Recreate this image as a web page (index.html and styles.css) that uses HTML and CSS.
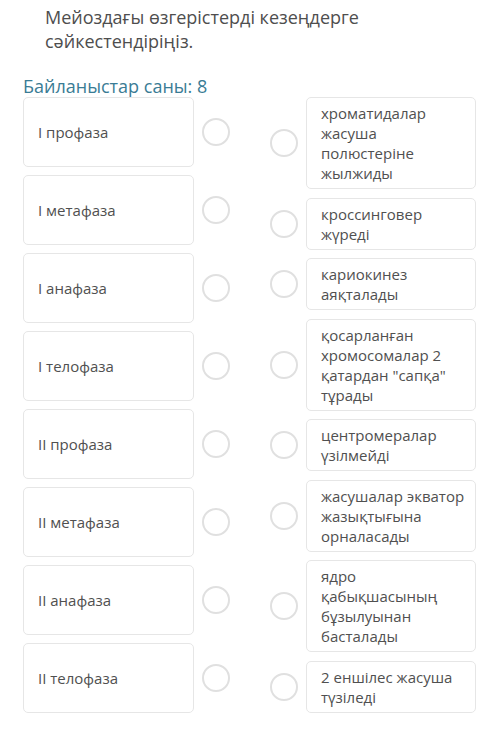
FILE: index.html
```html
<!DOCTYPE html>
<html lang="kk">
<head>
<meta charset="utf-8">
<title>Мейоз</title>
<link rel="stylesheet" href="styles.css">
</head>
<body>
<h1 class="title">Мейоздағы өзгерістерді кезеңдерге сәйкестендіріңіз.</h1>
<div class="count">Байланыстар саны: 8</div>
<div class="board">
  <div class="col col-left">
    <div class="item"><div class="card card-left">I профаза</div><span class="dot"></span></div>
    <div class="item"><div class="card card-left">I метафаза</div><span class="dot"></span></div>
    <div class="item"><div class="card card-left">I анафаза</div><span class="dot"></span></div>
    <div class="item"><div class="card card-left">I телофаза</div><span class="dot"></span></div>
    <div class="item"><div class="card card-left">II профаза</div><span class="dot"></span></div>
    <div class="item"><div class="card card-left">II метафаза</div><span class="dot"></span></div>
    <div class="item"><div class="card card-left">II анафаза</div><span class="dot"></span></div>
    <div class="item"><div class="card card-left">II телофаза</div><span class="dot"></span></div>
  </div>
  <div class="col col-right">
    <div class="item"><span class="dot"></span><div class="card card-right">хроматидалар жасуша полюстеріне жылжиды</div></div>
    <div class="item"><span class="dot"></span><div class="card card-right">кроссинговер жүреді</div></div>
    <div class="item"><span class="dot"></span><div class="card card-right">кариокинез аяқталады</div></div>
    <div class="item"><span class="dot"></span><div class="card card-right">қосарланған хромосомалар 2 қатардан "сапқа" тұрады</div></div>
    <div class="item"><span class="dot"></span><div class="card card-right">центромералар үзілмейді</div></div>
    <div class="item"><span class="dot"></span><div class="card card-right">жасушалар экватор жазықтығына орналасады</div></div>
    <div class="item"><span class="dot"></span><div class="card card-right">ядро қабықшасының бұзылуынан басталады</div></div>
    <div class="item"><span class="dot"></span><div class="card card-right">2 еншілес жасуша түзіледі</div></div>
  </div>
</div>
</body>
</html>
```

FILE: styles.css
```css
* { box-sizing: border-box; }

body {
  margin: 0;
  background: #ffffff;
  font-family: "Open Sans", "Noto Sans", sans-serif;
  color: #505050;
}

.title {
  margin: 5px 0 0 0;
  padding: 0 20px 0 45px;
  font-size: 18px;
  font-weight: 400;
  line-height: 24px;
  color: #4e4e4e;
}

.count {
  margin: 22px 0 0 23px;
  font-size: 18px;
  line-height: 22px;
  color: #3a7c95;
}

.board {
  display: flex;
  gap: 40px;
  padding-left: 23px;
}

.col {
  display: flex;
  flex-direction: column;
}

.col-left { gap: 8px; }
.col-right { gap: 8.5px; }

.item {
  display: flex;
  align-items: center;
  gap: 8px;
}

.card {
  background: #ffffff;
  border: 1px solid #e6e6e6;
  border-radius: 5px;
  font-size: 15px;
  line-height: 20px;
  color: #505050;
}

.card-left {
  width: 171px;
  height: 70px;
  display: flex;
  align-items: center;
  padding: 0 10px 0 14px;
}

.card-right {
  width: 170px;
  padding: 5px 8px 5px 14px;
}

.dot {
  flex: none;
  width: 28px;
  height: 28px;
  border: 2px solid #e0e0e0;
  border-radius: 50%;
}
```
